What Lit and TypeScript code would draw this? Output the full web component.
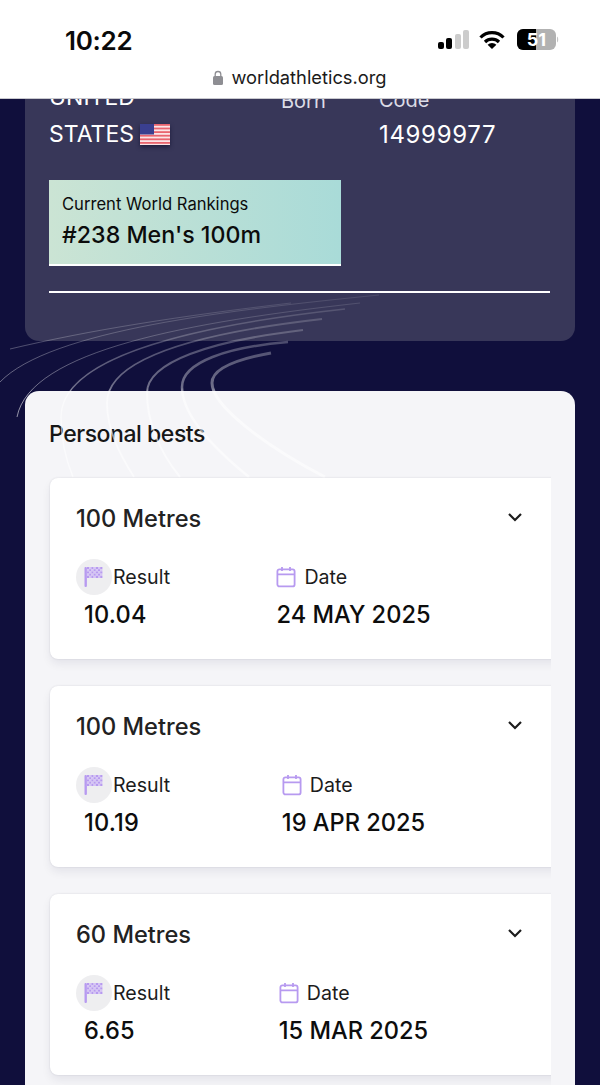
import { LitElement, html, css, svg } from "lit";
import { customElement } from "lit/decorators.js";

interface Best { event: string; result: string; date: string; }
const BESTS: Best[] = [
  { event: "100 Metres", result: "10.04", date: "24 MAY 2025" },
  { event: "100 Metres", result: "10.19", date: "19 APR 2025" },
  { event: "60 Metres", result: "6.65", date: "15 MAR 2025" },
];

const TRACKS: [string, number][] = [
  ["M271 353C238 359 212 368 212 383C212 405 262 444 325 477", 3],
  ["M288 342C228 347 182 362 182 387C182 415 212 447 249 477", 2.5],
  ["M303 330C210 341 147 362 147 393C147 420 158 450 180 477", 2],
  ["M322 319C190 334 107 360 107 403C107 430 120 455 134 477", 1.8],
  ["M345 309C180 327 61 360 61 417C61 440 66 460 73 477", 1.4],
  ["M360 303C190 322 30 350 17 417", 1],
  ["M379 295C230 310 50 330 0 382", 1],
  ["M291 303C180 316 90 330 10 349", 1],
];

@customElement("app-root")
export class AppRoot extends LitElement {
  static styles = css`
    :host {
      display: block;
      position: relative;
      height: 1085px;
      overflow: hidden;
      background: #100f3c;
      font-family: Inter, "Liberation Sans", sans-serif;
      color: #111;
    }
    .top {
      position: relative;
      z-index: 3;
      height: 98px;
      background: #fff;
      border-bottom: 1px solid #c9c9cf;
      box-sizing: content-box;
    }
    .status {
      display: flex;
      justify-content: space-between;
      align-items: center;
      padding: 24px 41px 0 65px;
      height: 32px;
    }
    .time { font-size: 26px; font-weight: 600; letter-spacing: -0.3px; color: #0a0a0a; }
    .sys { display: block; }
    .url {
      display: flex;
      justify-content: center;
      align-items: center;
      gap: 8px;
      margin-top: 10px;
      font-size: 18.3px;
      color: #1a1a1a;
    }
    main { position: relative; margin-top: -41px; padding: 0 25px; }
    .panel {
      background: #383759;
      border-radius: 0 0 14px 14px;
      padding: 21px 25px 48px;
      color: #fff;
    }
    .facts {
      display: grid;
      grid-template-columns: 231px 98px 1fr;
      align-items: start;
      font-size: 23px;
      line-height: 37px;
      height: 60px;
    }
    .country { display: block; width: 130px; margin-left: -1px; }
    .flag { vertical-align: -3px; filter: drop-shadow(0 2px 2px rgba(10, 10, 40, .6)); }
    .label { color: #dcdce6; font-size: 20px; line-height: 32px; display: block; }
    .born { padding-top: 6px; }
    .code-col { padding-top: 5px; }
    .code { font-size: 24px; letter-spacing: .65px; }
    .rank {
      margin: 41px 0 0 -1px;
      padding: 11px 13px;
      height: 62px;
      width: 266px;
      background: linear-gradient(90deg, #cbe4d4, #a9dbd8);
      border-bottom: 2px solid #fff;
      color: #0c0c0c;
    }
    .rank-title { font-size: 16.6px; line-height: 26px; }
    .rank-value { font-size: 23.2px; font-weight: 500; line-height: 36px; }
    .rule { height: 1.5px; background: #fff; margin: 25px 0 0 -1px; }
    .tracks { position: absolute; left: 0; top: 0; z-index: 2; pointer-events: none; }
    .bests {
      position: relative;
      margin-top: 50px;
      background: #f5f5f8;
      border-radius: 14px 14px 0 0;
      padding: 27px 24px 0 25px;
      min-height: 800px;
    }
    h2 { margin: 0 0 0 -1px; font-size: 23px; letter-spacing: -0.45px; line-height: 32px; font-weight: 500; color: #161616; }
    .list {
      position: relative;
      z-index: 3;
      display: flex;
      flex-direction: column;
      gap: 27px;
      margin: 11px 0 0 -10px;
      padding: 17px 0 30px 10px;
      overflow: hidden;
    }
    .card {
      width: 560px;
      height: 181px;
      box-sizing: border-box;
      background: #fff;
      border-radius: 8px 0 0 8px;
      box-shadow: 0 0 2px rgba(20, 20, 50, .12), 0 5px 10px rgba(20, 20, 50, .07);
      padding: 22px 0 0 26px;
    }
    .head { display: flex; align-items: center; width: 447px; height: 38px; justify-content: space-between; }
    .event { font-size: 23.6px; font-weight: 500; color: #222; }
    .chev { margin-top: -4px; }
    .cols { display: grid; grid-template-columns: 154px 247px; margin-top: 21px; }
    .col { display: flex; flex-direction: column; }
    .col.date { justify-self: center; }
    .row { display: flex; align-items: center; height: 36px; font-size: 19.6px; color: #1c1c1c; }
    .badge { width: 36px; height: 36px; border-radius: 50%; background: #eeeef0; display: flex; align-items: center; justify-content: center; margin-right: 1px; }
    .cal { margin-right: 8px; }
    .value { font-size: 23.6px; font-weight: 500; line-height: 38px; color: #0d0d0d; margin-top: 1px; }
    .result .value { padding-left: 8px; letter-spacing: .2px; }
  `;

  private renderFlag() {
    const stripes = [0, 1, 2, 3, 4, 5].map((i) => svg`<rect x="0" y="${i * 3.6 + 1.8}" width="30" height="1.8" fill="#fbe4e6"/>`);
    return html`<svg class="flag" width="30" height="21" viewBox="0 0 30 21" aria-hidden="true">
      <rect width="30" height="21" fill="#e9646f"/>${stripes}
      <rect width="14" height="10.5" fill="#3a3f8f"/>
    </svg>`;
  }

  private renderCheckerFlag() {
    const cells = [];
    for (let r = 0; r < 5; r++) {
      for (let c = 0; c < 7; c++) {
        const fill = (r + c) % 2 === 0 ? "#b79af0" : "#d6c5f6";
        cells.push(svg`<rect x="${3 + c * 2.2}" y="${1 + r * 2.2}" width="2.2" height="2.2" fill="${fill}"/>`);
      }
    }
    return html`<svg width="20" height="22" viewBox="0 0 20 22" aria-hidden="true">
      ${cells}<rect x="0.5" y="1" width="2.4" height="20" rx="1" fill="#b79af0"/>
    </svg>`;
  }

  private renderCard(b: Best) {
    return html`<article class="card">
      <div class="head">
        <span class="event">${b.event}</span>
        <svg class="chev" width="16" height="10" viewBox="0 0 16 10" aria-hidden="true"><path d="M2 2l6 6 6-6" fill="none" stroke="#1c1c1c" stroke-width="2.2"/></svg>
      </div>
      <div class="cols">
        <div class="col result">
          <div class="row"><span class="badge">${this.renderCheckerFlag()}</span>Result</div>
          <div class="value">${b.result}</div>
        </div>
        <div class="col date">
          <div class="row">
            <svg class="cal" width="20" height="22" viewBox="0 0 20 22" aria-hidden="true"><g fill="none" stroke="#b79af0" stroke-width="1.8"><rect x="1.4" y="3.4" width="17.2" height="17" rx="2"/><path d="M1.4 8.4h17.2M6 1v4M14 1v4"/></g></svg>
            Date
          </div>
          <div class="value">${b.date}</div>
        </div>
      </div>
    </article>`;
  }

  render() {
    return html`
      <header class="top">
        <div class="status">
          <span class="time">10:22</span>
          <svg class="sys" width="121" height="24" viewBox="0 0 121 24" aria-hidden="true">
            <rect x="0" y="14" width="6" height="7" rx="2" fill="#000"/>
            <rect x="8" y="10" width="6" height="11" rx="2" fill="#000"/>
            <rect x="17" y="6" width="6" height="15" rx="2" fill="#ccc"/>
            <rect x="25" y="2" width="6" height="19" rx="2" fill="#ccc"/>
            <g fill="none" stroke="#000" stroke-width="3.2">
              <path d="M42.5 9.5a16 16 0 0 1 23 0"/>
              <path d="M47 14a10 10 0 0 1 14 0"/>
            </g>
            <path d="M54 21l-4.4-4.2a6.4 6.4 0 0 1 8.8 0z" fill="#000"/>
            <rect x="79" y="1" width="39" height="21" rx="6" fill="#b2b2b2"/>
            <path d="M85 1h13v21H85a6 6 0 0 1-6-6V7a6 6 0 0 1 6-6z" fill="#000"/>
            <path d="M119 8.500c1.600 .6 1.600 5.500 0 6z" fill="#c4c4c4"/>
            <text x="98.500" y="18" text-anchor="middle" font-family="Inter, sans-serif" font-size="18" font-weight="700" fill="#fff">51</text>
          </svg>
        </div>
        <div class="url">
          <svg width="10" height="15" viewBox="0 0 10 15" aria-hidden="true"><path d="M2.200 6.500V4.300a2.800 2.800 0 0 1 5.600 0v2.200" fill="none" stroke="#8e8e93" stroke-width="1.300"/><rect y="6" width="10" height="9" rx="1.500" fill="#8e8e93"/></svg>
          <span>worldathletics.org</span>
        </div>
      </header>
      <main>
        <section class="panel">
          <div class="facts">
            <div class="country">UNITED STATES ${this.renderFlag()}</div>
            <div class="born"><span class="label">Born</span></div>
            <div class="code-col">
              <span class="label">Code</span>
              <span class="code">14999977</span>
            </div>
          </div>
          <div class="rank">
            <div class="rank-title">Current World Rankings</div>
            <div class="rank-value">#238 Men's 100m</div>
          </div>
          <div class="rule"></div>
        </section>
        <section class="bests">
          <h2>Personal bests</h2>
          <div class="list">${BESTS.map((b) => this.renderCard(b))}</div>
        </section>
      </main>
      <svg class="tracks" width="600" height="480" viewBox="0 0 600 480" aria-hidden="true">
        <defs>
          <linearGradient id="t" gradientUnits="userSpaceOnUse" x1="0" y1="295" x2="0" y2="480">
            <stop offset="0" stop-color="#fff" stop-opacity=".1"/>
            <stop offset=".5" stop-color="#fff" stop-opacity=".4"/>
            <stop offset=".52" stop-color="#fff" stop-opacity=".55"/>
            <stop offset="1" stop-color="#fff" stop-opacity=".55"/>
          </linearGradient>
        </defs>
        ${TRACKS.map(([d, w]) => svg`<path d="${d}" fill="none" stroke="url(#t)" stroke-width="${w}"/>`)}
      </svg>
    `;
  }
}
